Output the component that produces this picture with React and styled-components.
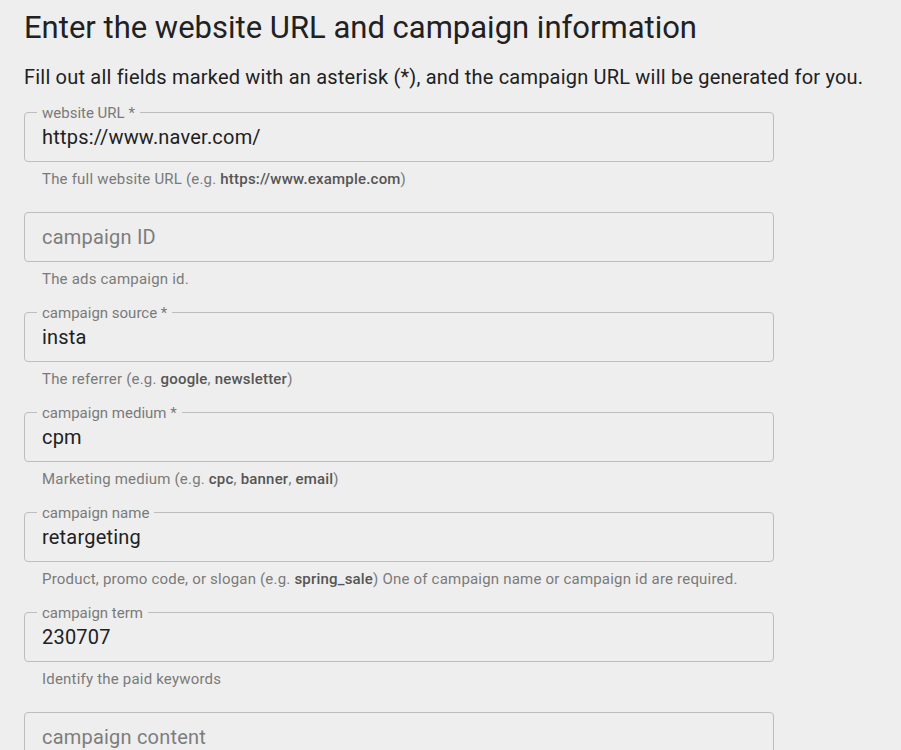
import React from 'react'
import styled, { createGlobalStyle } from 'styled-components'

const Global = createGlobalStyle`
  html, body {
    margin: 0;
    padding: 0;
    background: #eeeeee;
  }
  body {
    font-family: Roboto, "Liberation Sans", sans-serif;
    color: #212121;
  }
`

const fields = [
  {
    label: 'website URL *',
    value: 'https://www.naver.com/',
    help: ['The full website URL (e.g. ', <b key="a">https://www.example.com</b>, ')'],
  },
  {
    placeholder: 'campaign ID',
    help: ['The ads campaign id.'],
  },
  {
    label: 'campaign source *',
    value: 'insta',
    help: ['The referrer (e.g. ', <b key="a">google</b>, ', ', <b key="b">newsletter</b>, ')'],
  },
  {
    label: 'campaign medium *',
    value: 'cpm',
    help: ['Marketing medium (e.g. ', <b key="a">cpc</b>, ', ', <b key="b">banner</b>, ', ', <b key="c">email</b>, ')'],
  },
  {
    label: 'campaign name',
    value: 'retargeting',
    help: ['Product, promo code, or slogan (e.g. ', <b key="a">spring_sale</b>, ') One of campaign name or campaign id are required.'],
  },
  {
    label: 'campaign term',
    value: '230707',
    help: ['Identify the paid keywords'],
  },
  {
    placeholder: 'campaign content',
    help: [],
  },
]

export default function App() {
  return (
    <Page>
      <Global />
      <Title>Enter the website URL and campaign information</Title>
      <Intro>Fill out all fields marked with an asterisk (*), and the campaign URL will be generated for you.</Intro>
      <Form>
        {fields.map((f, i) => (
          <Field key={i}>
            <Outline>
              {f.label && <Label>{f.label}</Label>}
              <Input defaultValue={f.value || ''} placeholder={f.label ? '' : f.placeholder} />
            </Outline>
            <Help>{f.help}</Help>
          </Field>
        ))}
      </Form>
    </Page>
  )
}

const Page = styled.div`
  padding: 10px 24px 0;
  height: 750px;
  box-sizing: border-box;
  overflow: hidden;
`

const Title = styled.h1`
  margin: 0;
  font-size: 31px;
  line-height: 36px;
  font-weight: 400;
  color: #212121;
`

const Intro = styled.p`
  margin: 17px 0 21px;
  font-size: 20px;
  line-height: 28px;
  letter-spacing: 0.2px;
  color: #212121;
`

const Form = styled.div`
  display: flex;
  flex-direction: column;
  width: 750px;
`

const Field = styled.div`
  height: 100px;
`

const Outline = styled.div`
  position: relative;
  height: 50px;
  box-sizing: border-box;
  border: 1px solid #bdbdbd;
  border-radius: 4px;
  display: flex;
  align-items: center;
`

const Label = styled.span`
  position: absolute;
  top: -9px;
  left: 12px;
  padding: 0 5px;
  background: #eeeeee;
  font-size: 15px;
  line-height: 18px;
  color: #7a7a7a;
`

const Input = styled.input`
  flex: 1;
  border: none;
  outline: none;
  background: transparent;
  padding: 0 16px 0 17px;
  font-family: Roboto, "Liberation Sans", sans-serif;
  font-size: 20px;
  letter-spacing: 0.2px;
  color: #212121;
  &::placeholder {
    color: #7d7d7d;
  }
`

const Help = styled.div`
  margin: 7px 0 0 18px;
  font-size: 15px;
  line-height: 20px;
  letter-spacing: 0.2px;
  color: #7a7a7a;
  b {
    font-weight: 500;
    color: #555555;
  }
`
